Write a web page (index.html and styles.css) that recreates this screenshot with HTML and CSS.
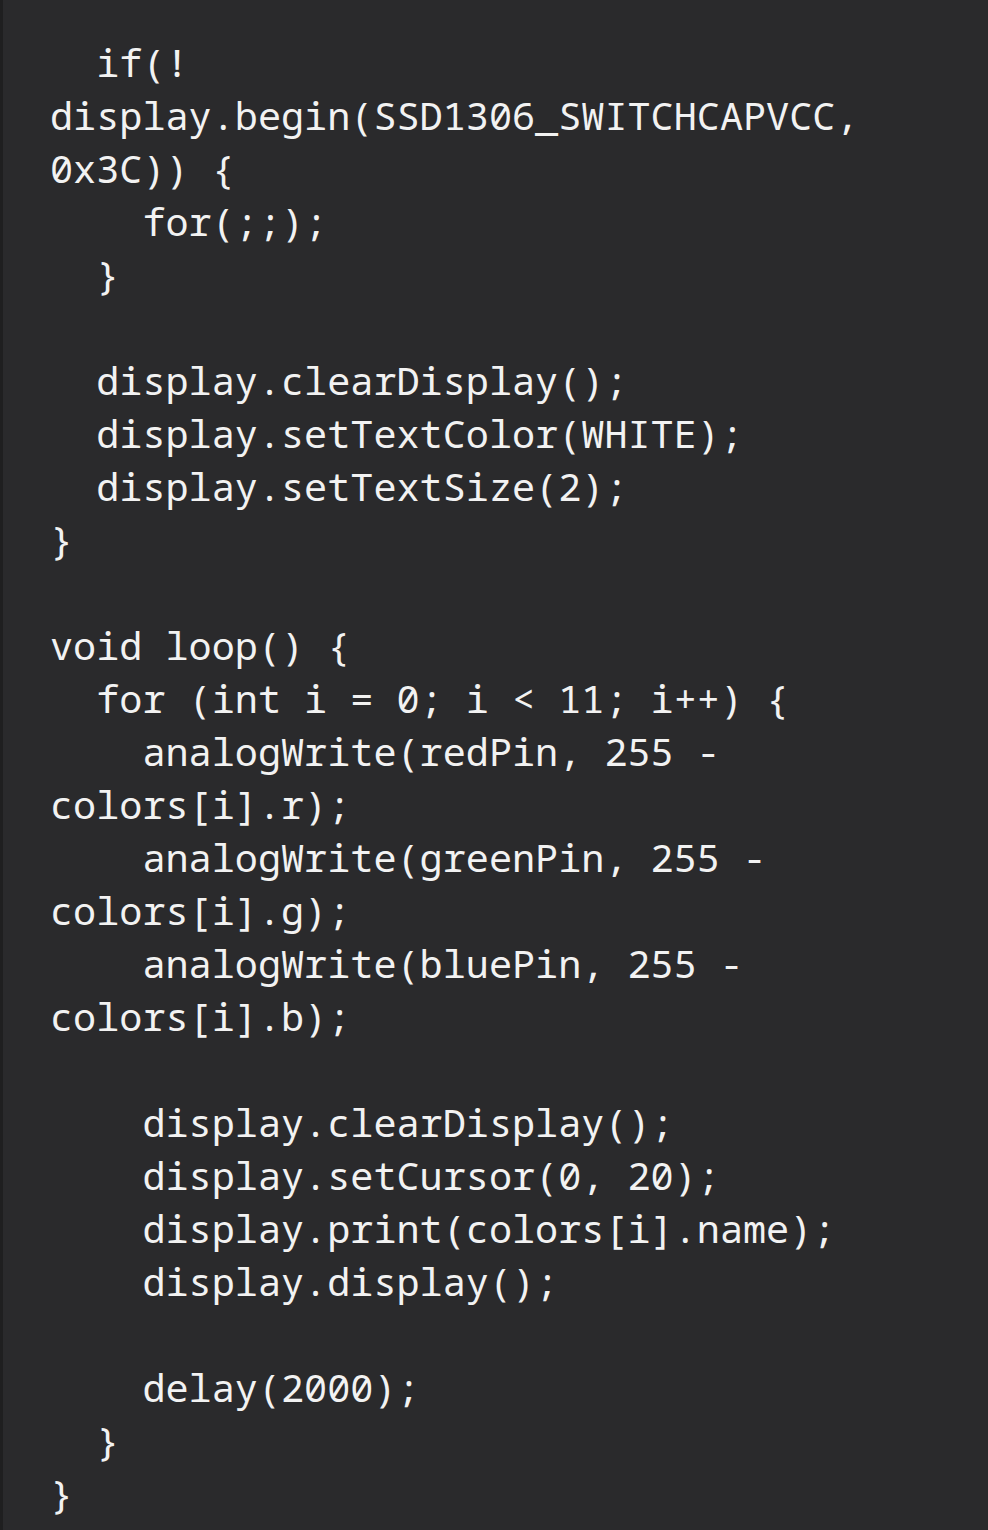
FILE: index.html
```html
<!DOCTYPE html>
<html>
<head>
<meta charset="utf-8">
<link rel="stylesheet" href="styles.css">
</head>
<body>
<div class="code"><pre class="lines">  if(!
display.begin(SSD1306_SWITCHCAPVCC,
0x3C)) {
    for(;;);
  }

  display.clearDisplay();
  display.setTextColor(WHITE);
  display.setTextSize(2);
}

void loop() {
  for (int i = 0; i &lt; 11; i++) {
    analogWrite(redPin, 255 -
colors[i].r);
    analogWrite(greenPin, 255 -
colors[i].g);
    analogWrite(bluePin, 255 -
colors[i].b);

    display.clearDisplay();
    display.setCursor(0, 20);
    display.print(colors[i].name);
    display.display();

    delay(2000);
  }
}</pre></div>
</body>
</html>
```
FILE: styles.css
```css
html, body {
  margin: 0;
  padding: 0;
  background: #2a2a2c;
}
.code {
  width: 988px;
  height: 1530px;
  box-sizing: border-box;
  border-left: 3px solid #1f1f20;
  padding: 36px 0 0 47px;
  overflow: hidden;
}
.lines {
  margin: 0;
  font-family: "Noto Sans Mono", "Droid Sans Mono", "DejaVu Sans Mono", monospace;
  font-size: 38.5px;
  line-height: 53px;
  color: #f2f2f2;
  white-space: pre;
}
```
